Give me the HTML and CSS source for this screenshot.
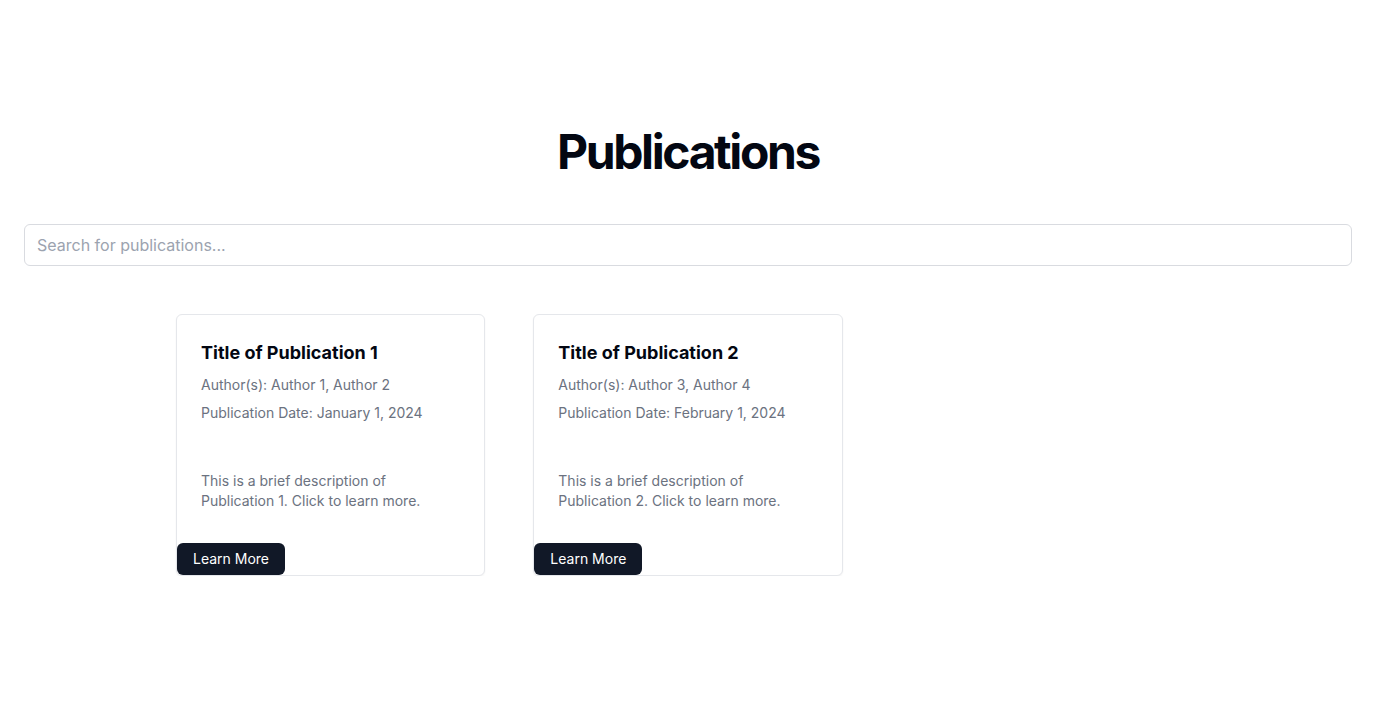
FILE: index.html
```html
<!DOCTYPE html>
<html lang="en">
<head>
<meta charset="utf-8">
<title>Publications</title>
<link rel="stylesheet" href="styles.css">
</head>
<body>
<main class="page">
  <h1 class="heading">Publications</h1>
  <input class="search" type="text" placeholder="Search for publications...">
  <div class="grid">
    <article class="card">
      <div class="card-body">
        <h2 class="card-title">Title of Publication 1</h2>
        <p class="meta">Author(s): Author 1, Author 2</p>
        <p class="meta">Publication Date: January 1, 2024</p>
        <p class="desc">This is a brief description of Publication 1. Click to learn more.</p>
      </div>
      <button class="btn">Learn More</button>
    </article>
    <article class="card">
      <div class="card-body">
        <h2 class="card-title">Title of Publication 2</h2>
        <p class="meta">Author(s): Author 3, Author 4</p>
        <p class="meta">Publication Date: February 1, 2024</p>
        <p class="desc">This is a brief description of Publication 2. Click to learn more.</p>
      </div>
      <button class="btn">Learn More</button>
    </article>
  </div>
</main>
</body>
</html>
```
FILE: styles.css
```css
* { box-sizing: border-box; }
html, body { margin: 0; padding: 0; background: #fff; }
body {
  font-family: Inter, "Noto Sans", "Liberation Sans", sans-serif;
  color: #111827;
}
.page {
  padding: 128px 24px 0;
  display: flex;
  flex-direction: column;
  align-items: center;
}
.heading {
  margin: 0 0 48px;
  font-size: 48px;
  line-height: 48px;
  font-weight: 700;
  letter-spacing: -0.05em;
  color: #030712;
  text-align: center;
}
.search {
  width: 100%;
  height: 42px;
  padding: 8px 12px;
  border: 1px solid #d9dbe0;
  border-radius: 6px;
  font-family: inherit;
  font-size: 16px;
  line-height: 24px;
  color: #111827;
  outline: none;
}
.search::placeholder { color: #9ca3af; }
.grid {
  margin-top: 48px;
  width: 1024px;
  display: grid;
  grid-template-columns: repeat(3, 1fr);
  gap: 48px;
}
.card {
  border: 1px solid #e5e7eb;
  border-radius: 6px;
  box-shadow: 0 1px 2px rgba(0,0,0,0.05);
  background: #fff;
  display: flex;
  flex-direction: column;
  align-items: flex-start;
}
.card-body { padding: 24px 24px 0; width: 100%; }
.card-title {
  margin: 0 0 8px;
  font-size: 18px;
  line-height: 28px;
  font-weight: 700;
  color: #030712;
}
.meta {
  margin: 0 0 8px;
  font-size: 14px;
  line-height: 20px;
  color: #6b7280;
}
.desc {
  margin: 48px 0 32px;
  font-size: 14px;
  line-height: 20px;
  color: #6b7280;
}
.btn {
  height: 32px;
  padding: 0 16px;
  border: none;
  border-radius: 6px;
  background: #111827;
  color: #fff;
  font-family: inherit;
  font-size: 14px;
  font-weight: 400;
  line-height: 20px;
  cursor: pointer;
}
```
